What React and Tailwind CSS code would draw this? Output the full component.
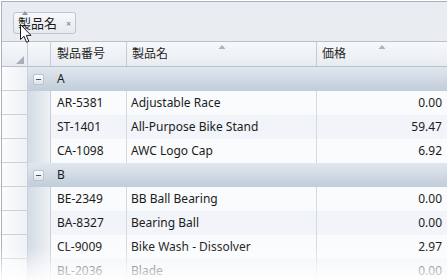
import React from "react";

const groups = [
  {
    key: "A",
    rows: [
      ["AR-5381", "Adjustable Race", "0.00"],
      ["ST-1401", "All-Purpose Bike Stand", "59.47"],
      ["CA-1098", "AWC Logo Cap", "6.92"],
    ],
  },
  {
    key: "B",
    rows: [
      ["BE-2349", "BB Ball Bearing", "0.00"],
      ["BA-8327", "Bearing Ball", "0.00"],
      ["CL-9009", "Bike Wash - Dissolver", "2.97"],
      ["BL-2036", "Blade", "0.00"],
    ],
  },
];

const cols = "grid grid-cols-[26px_23px_76px_190px_130px]";

function SortArrow() {
  return (
    <svg width="7" height="4" viewBox="0 0 7 4" className="absolute top-[3px] left-1/2 -translate-x-1/2">
      <path d="M0 4 L3.5 0 L7 4 Z" fill="#a9b2bd" />
    </svg>
  );
}

function GroupRow({ label }) {
  return (
    <div className={cols + " h-[24px]"}>
      <div className="border-r border-b border-[#c9d1db] bg-gradient-to-r from-[#fbfcfd] to-[#eef1f5]" />
      <div className="col-span-4 flex items-center bg-gradient-to-b from-[#e1e7ee] to-[#c1cddb]">
        <div className="w-[23px] flex items-center justify-center">
          <div className="ml-[-2px] w-[11px] h-[11px] rounded-[2px] border border-[#b9c3cf] bg-gradient-to-b from-[#fdfdfe] to-[#dfe4ea] flex items-center justify-center">
            <div className="w-[5px] h-[1px] bg-[#4a5360]" />
          </div>
        </div>
        <div className="pl-[6px] text-[12px] text-[#1b1b1b]">{label}</div>
      </div>
    </div>
  );
}

function DataRow({ r, alt }) {
  const bg = alt ? "bg-[#f1f4f8]" : "bg-[#fafbfc]";
  return (
    <div className={cols + " h-[24px] text-[12px] text-[#1b1b1b]"}>
      <div className="border-r border-b border-[#c9d1db] bg-gradient-to-r from-[#fbfcfd] to-[#eef1f5]" />
      <div className="border-r border-[#c5ced9] bg-gradient-to-r from-[#d3dbe5] to-[#eef1f5]" />
      <div className={bg + " border-r border-[#d3dae3] pl-[6px] flex items-center"}>{r[0]}</div>
      <div className={bg + " border-r border-[#d3dae3] pl-[4px] flex items-center"}>{r[1]}</div>
      <div className={bg + " pr-[5px] flex items-center justify-end"}>{r[2]}</div>
    </div>
  );
}

export default function App() {
  return (
    <div
      className="relative w-[448px] h-[280px] overflow-hidden bg-white"
      style={{ fontFamily: '"Noto Sans", "Noto Sans CJK JP", sans-serif' }}
    >
      <div className="ml-[1px] mt-[1px] w-[446px] border-l border-t border-[#a7b1bf]">
        {/* group panel */}
        <div className="h-[39px] bg-[#e9edf2] pl-[11px] pt-[10px]">
          <div className="relative w-[63px] h-[22px] rounded-[3px] border border-[#bcc5d0] bg-gradient-to-b from-[#f8f9fb] to-[#e6eaef] flex items-center pl-[4px]">
            <span className="text-[13px] text-[#1b1b1b] leading-none">製品名</span>
            <span className="ml-[9px] text-[9px] text-[#6b7480] leading-none">×</span>
          </div>
        </div>
        {/* header */}
        <div className={cols + " h-[26px] border-t border-b border-[#b6c1ce] bg-gradient-to-b from-[#f6f8fa] to-[#e8ecf1] text-[12px] text-[#1f1f1f]"}>
          <div className="relative border-r border-[#c3ccd7]">
            <svg width="8" height="8" viewBox="0 0 8 8" className="absolute right-[3px] bottom-[2px]">
              <path d="M8 0 L8 8 L0 8 Z" fill="#a7afb9" />
            </svg>
          </div>
          <div className="border-r border-[#c3ccd7]" />
          <div className="border-r border-[#c3ccd7] pl-[6px] flex items-center">製品番号</div>
          <div className="relative border-r border-[#c3ccd7] pl-[5px] flex items-center">
            製品名
            <SortArrow />
          </div>
          <div className="relative pl-[5px] flex items-center">
            価格
            <SortArrow />
          </div>
        </div>
        {groups.map((g) => (
          <React.Fragment key={g.key}>
            <GroupRow label={g.key} />
            {g.rows.map((r, i) => (
              <DataRow key={r[0]} r={r} alt={i % 2 === 1} />
            ))}
          </React.Fragment>
        ))}
      </div>

      {/* bottom fade */}
      <div className="absolute left-0 right-0 bottom-0 h-[34px] bg-gradient-to-b from-[rgba(255,255,255,0)] to-[rgba(255,255,255,0.92)]" />

      {/* drag indicator */}
      <svg width="6" height="4" viewBox="0 0 6 4" className="absolute left-[22px] top-[11px]">
        <path d="M0 4 L3 0 L6 4 Z" fill="#8e97a3" />
      </svg>
      {/* mouse cursor */}
      <svg width="13" height="20" viewBox="0 0 13 20" className="absolute left-[20px] top-[24px]">
        <path
          d="M0.5 0.5 L0.5 15.5 L4 12.2 L6.5 18.3 L8.8 17.3 L6.3 11.4 L11 11.4 Z"
          fill="#ffffff"
          stroke="#1a1a1a"
          strokeWidth="1"
          strokeLinejoin="miter"
        />
      </svg>
    </div>
  );
}
